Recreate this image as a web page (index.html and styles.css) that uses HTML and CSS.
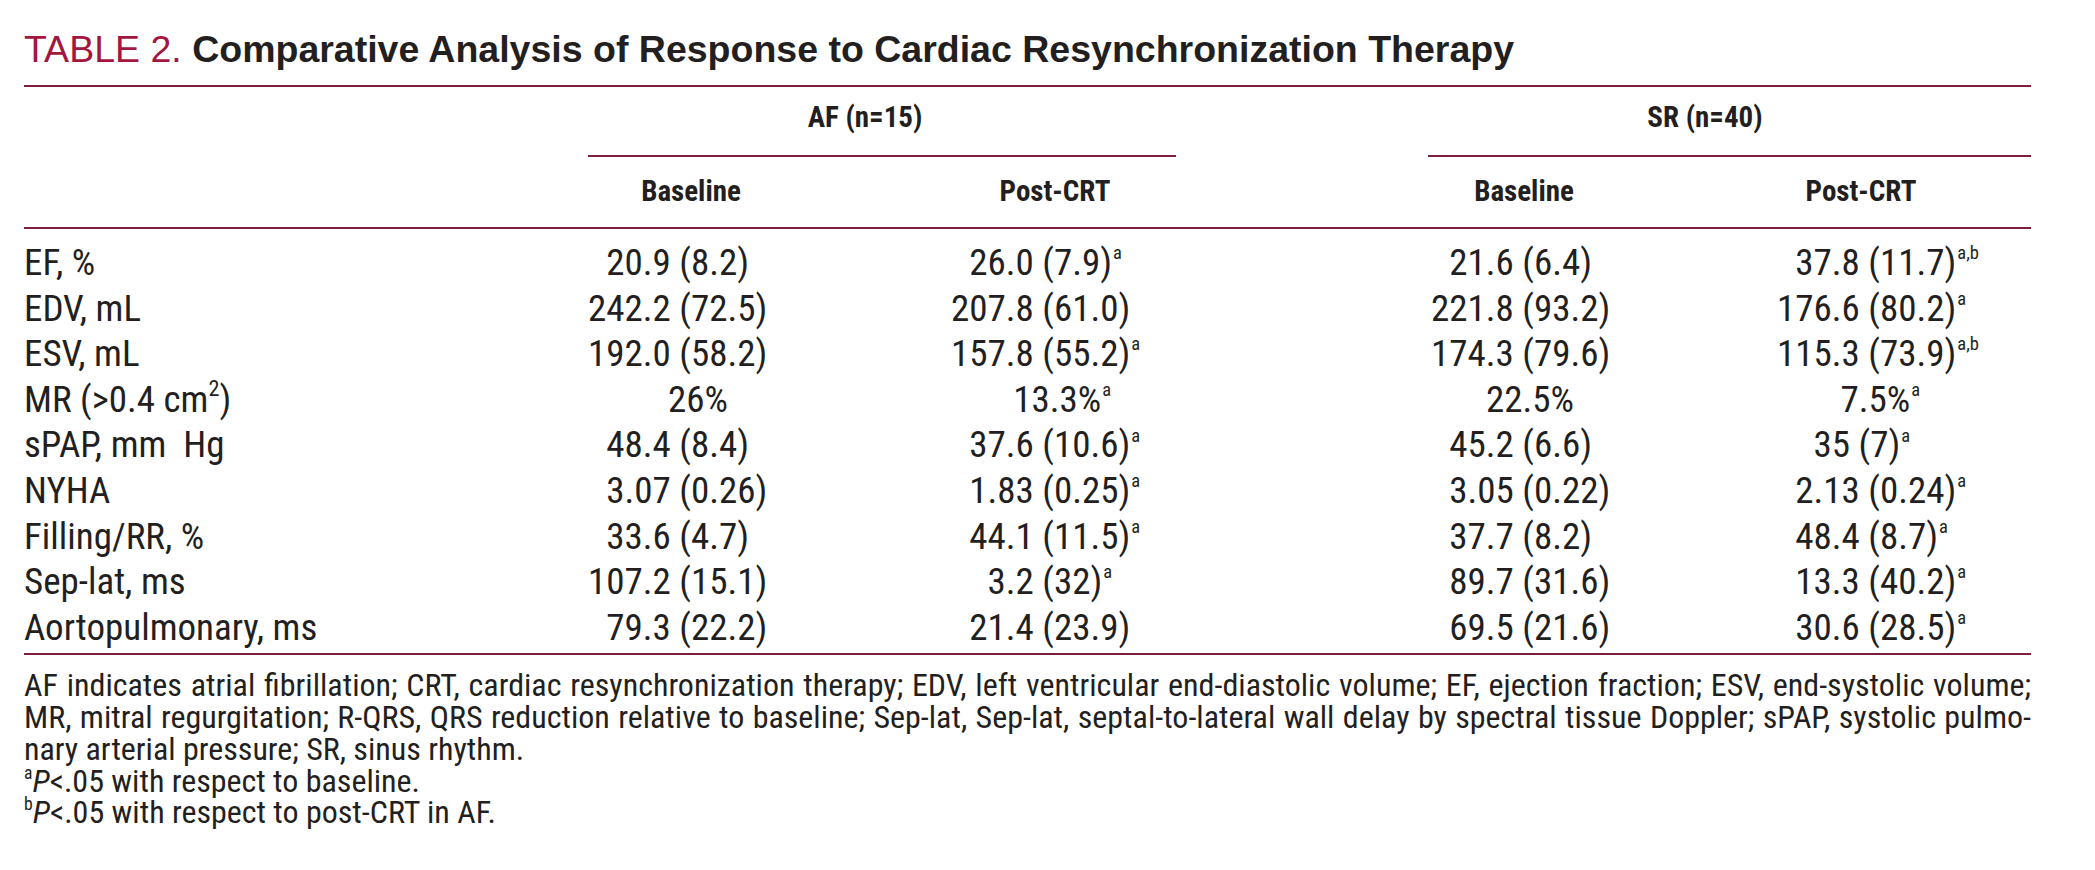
FILE: index.html
```html
<!DOCTYPE html>
<html lang="en">
<head>
<meta charset="utf-8">
<title>Table 2. Comparative Analysis of Response to Cardiac Resynchronization Therapy</title>
<link rel="stylesheet" href="styles.css">
</head>
<body>
<div class="page">
  <h1 class="title"><span class="tag">TABLE 2.</span> Comparative Analysis of Response to Cardiac Resynchronization Therapy</h1>
  <table class="results">
    <colgroup>
      <col class="w-label"><col class="w-afb"><col class="w-afp"><col class="w-gap"><col class="w-srb"><col class="w-srp">
    </colgroup>
    <thead>
      <tr class="groups">
        <th></th>
        <th colspan="2"><div class="grp grp-af">AF (n=15)</div></th>
        <th></th>
        <th colspan="2"><div class="grp grp-sr">SR (n=40)</div></th>
      </tr>
      <tr class="subs">
        <th></th>
        <th class="afb">Baseline</th>
        <th class="afp">Post-CRT</th>
        <th></th>
        <th class="srb">Baseline</th>
        <th class="srp">Post-CRT</th>
      </tr>
    </thead>
    <tbody>
      <tr class="first">
        <td class="lbl">EF, %</td>
        <td class="afb i1">20.9 (8.2)</td>
        <td class="afp i1">26.0 (7.9)<sup>a</sup></td>
        <td></td>
        <td class="srb i1">21.6 (6.4)</td>
        <td class="srp i1">37.8 (11.7)<sup>a,b</sup></td>
      </tr>
      <tr>
        <td class="lbl">EDV, mL</td>
        <td class="afb">242.2 (72.5)</td>
        <td class="afp">207.8 (61.0)</td>
        <td></td>
        <td class="srb">221.8 (93.2)</td>
        <td class="srp">176.6 (80.2)<sup>a</sup></td>
      </tr>
      <tr>
        <td class="lbl">ESV, mL</td>
        <td class="afb">192.0 (58.2)</td>
        <td class="afp">157.8 (55.2)<sup>a</sup></td>
        <td></td>
        <td class="srb">174.3 (79.6)</td>
        <td class="srp">115.3 (73.9)<sup>a,b</sup></td>
      </tr>
      <tr>
        <td class="lbl">MR (&gt;0.4 cm<sup class="unit">2</sup>)</td>
        <td class="afb pct">26%</td>
        <td class="afp pct">13.3%<sup>a</sup></td>
        <td></td>
        <td class="srb pct">22.5%</td>
        <td class="srp pct">7.5%<sup>a</sup></td>
      </tr>
      <tr>
        <td class="lbl">sPAP, mm&nbsp; Hg</td>
        <td class="afb i1">48.4 (8.4)</td>
        <td class="afp i1">37.6 (10.6)<sup>a</sup></td>
        <td></td>
        <td class="srb i1">45.2 (6.6)</td>
        <td class="srp i2">35 (7)<sup>a</sup></td>
      </tr>
      <tr>
        <td class="lbl">NYHA</td>
        <td class="afb i1">3.07 (0.26)</td>
        <td class="afp i1">1.83 (0.25)<sup>a</sup></td>
        <td></td>
        <td class="srb i1">3.05 (0.22)</td>
        <td class="srp i1">2.13 (0.24)<sup>a</sup></td>
      </tr>
      <tr>
        <td class="lbl">Filling/RR, %</td>
        <td class="afb i1">33.6 (4.7)</td>
        <td class="afp i1">44.1 (11.5)<sup>a</sup></td>
        <td></td>
        <td class="srb i1">37.7 (8.2)</td>
        <td class="srp i1">48.4 (8.7)<sup>a</sup></td>
      </tr>
      <tr>
        <td class="lbl">Sep-lat, ms</td>
        <td class="afb">107.2 (15.1)</td>
        <td class="afp i2">3.2 (32)<sup>a</sup></td>
        <td></td>
        <td class="srb i1">89.7 (31.6)</td>
        <td class="srp i1">13.3 (40.2)<sup>a</sup></td>
      </tr>
      <tr class="last">
        <td class="lbl">Aortopulmonary, ms</td>
        <td class="afb i1">79.3 (22.2)</td>
        <td class="afp i1">21.4 (23.9)</td>
        <td></td>
        <td class="srb i1">69.5 (21.6)</td>
        <td class="srp i1">30.6 (28.5)<sup>a</sup></td>
      </tr>
    </tbody>
  </table>
  <div class="notes">
    <p class="jl">AF indicates atrial fibrillation; CRT, cardiac resynchronization therapy; EDV, left ventricular end-diastolic volume; EF, ejection fraction; ESV, end-systolic volume;</p>
    <p class="jl">MR, mitral regurgitation; R-QRS, QRS reduction relative to baseline; Sep-lat, Sep-lat, septal-to-lateral wall delay by spectral tissue Doppler; sPAP, systolic pulmo-</p>
    <p>nary arterial pressure; SR, sinus rhythm.</p>
    <p><sup>a</sup><i>P</i>&lt;.05 with respect to baseline.</p>
    <p><sup>b</sup><i>P</i>&lt;.05 with respect to post-CRT in AF.</p>
  </div>
</div>
</body>
</html>
```

FILE: styles.css
```css
html, body {
  margin: 0;
  padding: 0;
  background: #ffffff;
}

body {
  color: #231f20;
  font-family: "Roboto Condensed", "Noto Sans", "Liberation Sans", sans-serif;
  font-stretch: condensed;
}

.page {
  width: 2007px;
  padding: 29px 0 0 24px;
}

.title {
  margin: 0 0 15px;
  font-family: "Liberation Sans", Arial, sans-serif;
  font-stretch: normal;
  font-size: 37.5px;
  line-height: 41px;
  font-weight: 700;
  white-space: nowrap;
  color: #231f20;
}

.title .tag {
  font-weight: 400;
  color: #a3173f;
}

.results {
  width: 2007px;
  table-layout: fixed;
  border-collapse: separate;
  border-spacing: 0;
  border-top: 2px solid #7c1d3e;
  border-bottom: 2px solid #7c1d3e;
  font-size: 37px;
}

.w-label { width: 564px; }
.w-afb { width: 292px; }
.w-afp { width: 296px; }
.w-gap { width: 244px; }
.w-srb { width: 315px; }
.w-srp { width: 296px; }

.results th {
  font-weight: 700;
  font-size: 29px;
  line-height: 36px;
  padding: 0;
  text-align: center;
  white-space: nowrap;
}

.groups th {
  padding-top: 12px;
  vertical-align: bottom;
}

.grp {
  text-align: center;
  padding-bottom: 20px;
  border-bottom: 2px solid #7c1d3e;
}

.grp-af {
  padding-right: 34px;
}

.grp-sr {
  margin-left: 8px;
  padding-right: 49px;
}

.subs th {
  padding-top: 16px;
  padding-bottom: 18px;
  border-bottom: 2px solid #7c1d3e;
}

.subs th.afb { padding-right: 86px; }
.subs th.afp { padding-left: 54px; }
.subs th.srb { padding-right: 107px; }
.subs th.srp { padding-right: 44px; }

.results td {
  padding: 0;
  line-height: 45.6px;
  white-space: nowrap;
  text-align: left;
}

.results tr.first td { padding-top: 11px; }
.results tr.last td { padding-bottom: 3px; }

.results td.lbl { padding-left: 0; }
.results td.afb { padding-left: 0; }
.results td.afp { padding-left: 71px; }
.results td.srb { padding-left: 11px; }
.results td.srp { padding-left: 42px; }

.results td.i1 { text-indent: 1ch; }
.results td.i2 { text-indent: 2ch; }

.results td.pct { text-align: right; padding-left: 0; }
.results td.afb.pct { padding-right: 152px; }
.results td.afp.pct { padding-right: 65px; }
.results td.srb.pct { padding-right: 161px; }
.results td.srp.pct { padding-right: 111px; }

.results sup {
  font-size: 0.5em;
  line-height: 0;
  vertical-align: 0.85em;
  margin-left: 1px;
}

.results sup.unit {
  font-size: 0.6em;
  vertical-align: 0.7em;
  margin-left: 0;
}

.notes {
  padding-top: 15px;
  font-size: 32px;
  line-height: 31.75px;
}

.notes p {
  margin: 0;
  white-space: nowrap;
}

.notes p.jl {
  text-align: justify;
  text-align-last: justify;
}

.notes sup {
  font-size: 0.55em;
  line-height: 0;
  vertical-align: 0.75em;
}

.notes i {
  font-style: italic;
}
```
